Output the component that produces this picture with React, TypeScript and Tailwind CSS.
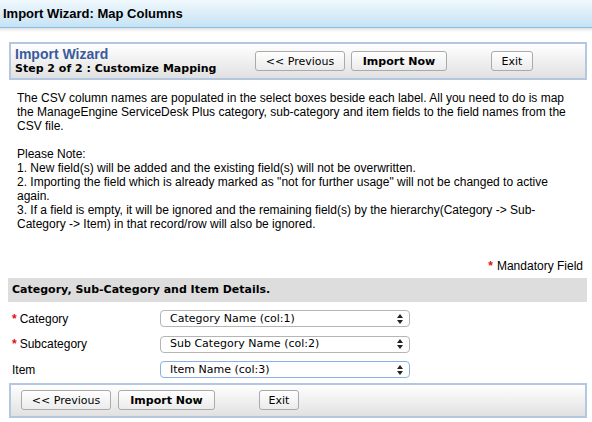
import React from 'react';

const verdana = { fontFamily: '"DejaVu Sans", Verdana, sans-serif' };

function Btn({ children, className, bold }: { children: React.ReactNode; className: string; bold?: boolean }) {
  return (
    <button
      className={`${className} block h-[20px] shrink-0 rounded-[3px] border border-[#aaaaaa] bg-gradient-to-b from-white to-[#ebebeb] pt-[2px] text-[11px] leading-[16px] text-black ${
        bold ? 'font-bold' : ''
      }`}
      style={verdana}
    >
      {children}
    </button>
  );
}

function Select({ value, focused }: { value: string; focused?: boolean }) {
  return (
    <div
      className={`flex h-[17px] w-[250px] items-center justify-between rounded-[4px] border bg-white pl-[9px] pr-[6px] text-[11px] text-black ${
        focused ? 'border-[#8ab0ea]' : 'border-[#b5b5b5]'
      }`}
      style={verdana}
    >
      <span>{value}</span>
      <svg width="6" height="10" viewBox="0 0 6 10">
        <path d="M3 0 L6 4 L0 4 Z" fill="#222" />
        <path d="M0 6 L6 6 L3 10 Z" fill="#222" />
      </svg>
    </div>
  );
}

function Row({ label, req, value, focused }: { label: string; req?: boolean; value: string; focused?: boolean }) {
  return (
    <div className="flex h-[25.5px] items-center">
      <div className="w-[160px] pl-[12px] text-[12px] text-black">
        {req && <span className="mr-[3px] font-bold text-[#e01010]">*</span>}
        {label}
      </div>
      <Select value={value} focused={focused} />
    </div>
  );
}

export default function App() {
  return (
    <div className="h-[422px] w-[592px] overflow-hidden bg-white" style={{ fontFamily: '"Liberation Sans", Arial, sans-serif' }}>
      {/* HEADER */}
      <div className="flex h-[28px] items-center border-b border-[#86bde0] bg-gradient-to-b from-[#f0f8fd] to-[#c6e3f4] px-[3px]">
        <div className="text-[13px] font-bold text-black">Import Wizard: Map Columns</div>
      </div>
      <div className="h-[4px] bg-gradient-to-b from-[#e2e2e2] to-white" />

      {/* TOP WIZARD BAR */}
      <div className="ml-[9px] mr-[5px] mt-[10px] flex h-[38px] items-center border-2 border-[#b4c7e0] bg-gradient-to-b from-white to-[#e1e1e1]">
        <div className="w-[244px] pl-[4px] pt-[1px]">
          <div className="text-[14px] font-bold leading-[15px] text-[#3a5a9c]">Import Wizard</div>
          <div className="text-[11px] font-bold leading-[14px] text-black" style={verdana}>
            Step 2 of 2 : Customize Mapping
          </div>
        </div>
        <div className="flex items-center">
          <Btn className="w-[90px]">&lt;&lt; Previous</Btn>
          <Btn className="ml-[6px] w-[96px]" bold>
            Import Now
          </Btn>
          <Btn className="ml-[44px] w-[42px]">Exit</Btn>
        </div>
      </div>

      {/* DESCRIPTION */}
      <div className="mt-[11px] pl-[17px] text-[12px] leading-[14px] text-black">
        <p className="whitespace-nowrap">
          The CSV column names are populated in the select boxes beside each label. All you need to do is map
          <br />
          the ManageEngine ServiceDesk Plus category, sub-category and item fields to the field names from the
          <br />
          CSV file.
        </p>
        <p className="mt-[14px] whitespace-nowrap">
          Please Note:
          <br />
          1. New field(s) will be added and the existing field(s) will not be overwritten.
          <br />
          2. Importing the field which is already marked as "not for further usage" will not be changed to active
          <br />
          again.
          <br />
          3. If a field is empty, it will be ignored and the remaining field(s) by the hierarchy(Category -&gt; Sub-
          <br />
          Category -&gt; Item) in that record/row will also be ignored.
        </p>
      </div>

      {/* MANDATORY */}
      <div className="mt-[28px] pr-[9px] text-right text-[12px] leading-[14px] text-black">
        <span className="mr-[4px] font-bold text-[#e01010]">*</span>Mandatory Field
      </div>

      {/* SECTION */}
      <div className="ml-[8px] mr-[5px] mt-[5px] flex h-[24px] items-center bg-[#dddddd] pl-[4px]">
        <div className="text-[11px] font-bold text-black" style={verdana}>
          Category, Sub-Category and Item Details.
        </div>
      </div>

      <div className="pt-[4px]">
        <Row label="Category" req value="Category Name (col:1)" />
        <Row label="Subcategory" req value="Sub Category Name (col:2)" />
        <Row label="Item" value="Item Name (col:3)" focused />
      </div>

      {/* BOTTOM WIZARD BAR */}
      <div className="ml-[9px] mr-[5px] flex h-[35px] items-center border-2 border-[#b4c7e0] bg-gradient-to-b from-white to-[#e1e1e1] pl-[10px]">
        <Btn className="w-[90px]">&lt;&lt; Previous</Btn>
        <Btn className="ml-[7px] w-[97px]" bold>
          Import Now
        </Btn>
        <Btn className="ml-[44px] w-[40px]">Exit</Btn>
      </div>
    </div>
  );
}
